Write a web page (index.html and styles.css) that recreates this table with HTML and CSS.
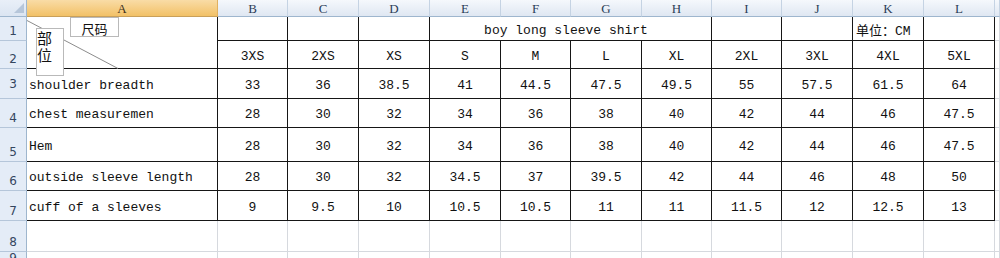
FILE: index.html
```html
<!DOCTYPE html>
<html>
<head>
<meta charset="utf-8">
<link rel="stylesheet" href="styles.css">
</head>
<body>
<div class="sheet">
  <!-- header row -->
  <div class="corner"></div>
  <div class="ch sel">A</div>
  <div class="ch">B</div><div class="ch">C</div><div class="ch">D</div><div class="ch">E</div>
  <div class="ch">F</div><div class="ch">G</div><div class="ch">H</div><div class="ch">I</div>
  <div class="ch">J</div><div class="ch">K</div><div class="ch">L</div><div class="ch"></div>

  <!-- row 1 -->
  <div class="rh">1</div>
  <div class="c t merged-a">
    <svg class="diag" width="100" height="60" viewBox="0 0 100 60"><line x1="0" y1="3.5" x2="91" y2="51.5" stroke="#8c8c8c" stroke-width="1"/></svg>
    <div class="tb tb-size">尺码</div>
    <div class="tb tb-part">部<br>位</div>
  </div>
  <div class="c t"></div><div class="c t"></div><div class="c t"></div>
  <div class="c t title">boy long sleeve shirt</div>
  <div class="c t"></div><div class="c t"></div>
  <div class="c t unit">单位：CM</div>
  <div class="c t"></div>
  <div class="c"></div>

  <!-- row 2 -->
  <div class="rh">2</div>
  <div class="c t">3XS</div><div class="c t">2XS</div><div class="c t">XS</div><div class="c t">S</div>
  <div class="c t">M</div><div class="c t">L</div><div class="c t">XL</div><div class="c t">2XL</div>
  <div class="c t">3XL</div><div class="c t">4XL</div><div class="c t">5XL</div>
  <div class="c"></div>

  <!-- row 3 -->
  <div class="rh r3">3</div>
  <div class="c t lbl">shoulder breadth</div>
  <div class="c t">33</div><div class="c t">36</div><div class="c t">38.5</div><div class="c t">41</div>
  <div class="c t">44.5</div><div class="c t">47.5</div><div class="c t">49.5</div><div class="c t">55</div>
  <div class="c t">57.5</div><div class="c t">61.5</div><div class="c t">64</div>
  <div class="c"></div>

  <!-- row 4 -->
  <div class="rh">4</div>
  <div class="c t lbl">chest measuremen</div>
  <div class="c t">28</div><div class="c t">30</div><div class="c t">32</div><div class="c t">34</div>
  <div class="c t">36</div><div class="c t">38</div><div class="c t">40</div><div class="c t">42</div>
  <div class="c t">44</div><div class="c t">46</div><div class="c t">47.5</div>
  <div class="c"></div>

  <!-- row 5 -->
  <div class="rh">5</div>
  <div class="c t lbl">Hem</div>
  <div class="c t">28</div><div class="c t">30</div><div class="c t">32</div><div class="c t">34</div>
  <div class="c t">36</div><div class="c t">38</div><div class="c t">40</div><div class="c t">42</div>
  <div class="c t">44</div><div class="c t">46</div><div class="c t">47.5</div>
  <div class="c"></div>

  <!-- row 6 -->
  <div class="rh">6</div>
  <div class="c t lbl">outside sleeve length</div>
  <div class="c t">28</div><div class="c t">30</div><div class="c t">32</div><div class="c t">34.5</div>
  <div class="c t">37</div><div class="c t">39.5</div><div class="c t">42</div><div class="c t">44</div>
  <div class="c t">46</div><div class="c t">48</div><div class="c t">50</div>
  <div class="c"></div>

  <!-- row 7 -->
  <div class="rh">7</div>
  <div class="c t lbl">cuff of a sleeves</div>
  <div class="c t">9</div><div class="c t">9.5</div><div class="c t">10</div><div class="c t">10.5</div>
  <div class="c t">10.5</div><div class="c t">11</div><div class="c t">11</div><div class="c t">11.5</div>
  <div class="c t">12</div><div class="c t">12.5</div><div class="c t">13</div>
  <div class="c"></div>

  <!-- row 8 -->
  <div class="rh">8</div>
  <div class="c"></div><div class="c"></div><div class="c"></div><div class="c"></div><div class="c"></div>
  <div class="c"></div><div class="c"></div><div class="c"></div><div class="c"></div><div class="c"></div>
  <div class="c"></div><div class="c"></div><div class="c"></div>

  <!-- row 9 -->
  <div class="rh">9</div>
  <div class="c"></div><div class="c"></div><div class="c"></div><div class="c"></div><div class="c"></div>
  <div class="c"></div><div class="c"></div><div class="c"></div><div class="c"></div><div class="c"></div>
  <div class="c"></div><div class="c"></div><div class="c"></div>
</div>
</body>
</html>
```

FILE: styles.css
```css
html, body {
  margin: 0;
  padding: 0;
  background: #ffffff;
  width: 1000px;
  height: 258px;
  overflow: hidden;
}

.sheet {
  display: grid;
  grid-template-columns: 27px 191px 70px 71px 71px 71px 70px 71px 70px 70px 71px 71px 71px 5px;
  grid-template-rows: 17px 24px 28px 30px 29px 34px 29px 30px 31px 16px;
  font-family: "Liberation Mono", "Noto Sans CJK SC", monospace;
  font-size: 13px;
  color: #111;
}

.sheet > div {
  box-sizing: border-box;
  min-width: 0;
  overflow: hidden;
}

/* corner select-all cell */
.corner {
  position: relative;
  background: linear-gradient(#e9eff8, #dbe5f2);
  border-right: 1px solid #9eb6ce;
  border-bottom: 1px solid #9eb6ce;
}
.corner::after {
  content: "";
  position: absolute;
  right: 2px;
  bottom: 3px;
  width: 10px;
  height: 10px;
  background: #b6c6da;
  clip-path: polygon(100% 0, 100% 100%, 0 100%);
}

/* column headers */
.ch {
  display: flex;
  align-items: center;
  justify-content: center;
  background: linear-gradient(#f5f8fc, #dfe7f2);
  border-right: 1px solid #c5d3e3;
  border-bottom: 1px solid #9eb6ce;
  font-family: "Liberation Serif", serif;
  font-size: 13px;
  color: #2b3d57;
  padding-top: 1px;
}
.ch.sel {
  background: linear-gradient(#f9dca6, #f2c167);
  border-right-color: #e0b060;
  border-bottom-color: #c9a05a;
  color: #3a3020;
}

/* row headers */
.rh {
  display: flex;
  align-items: flex-end;
  justify-content: center;
  padding-bottom: 2px;
  background: #e4ecf7;
  border-right: 1px solid #9eb6ce;
  border-bottom: 1px solid #b5c6da;
  font-family: "DejaVu Sans", sans-serif;
  font-size: 12px;
  color: #34465f;
}
.rh.r3 {
  padding-bottom: 7px;
}

/* cells */
.c {
  display: flex;
  align-items: center;
  justify-content: center;
  padding-top: 3px;
  border-right: 1px solid #d6d9de;
  border-bottom: 1px solid #d6d9de;
  white-space: nowrap;
}
.c.t {
  border-right-color: #161616;
  border-bottom-color: #161616;
}
.c.lbl {
  justify-content: flex-start;
  padding-left: 2px;
}

.merged-a {
  grid-row: span 2;
  position: relative;
  overflow: visible !important;
}
.title {
  grid-column: span 4;
  padding-right: 9px;
}
.unit {
  justify-content: flex-start !important;
  padding-left: 3px;
  padding-top: 2px !important;
}
.unit, .tb {
  font-family: "Liberation Mono", "Noto Sans CJK SC", monospace;
}

.diag {
  position: absolute;
  left: 0;
  top: 0;
}

/* floating text boxes */
.tb {
  position: absolute;
  box-sizing: border-box;
  background: #ffffff;
  border: 1px solid #b9b9b9;
  color: #111;
  z-index: 2;
}
.tb-size {
  left: 43px;
  top: 0;
  width: 49px;
  height: 20px;
  font-size: 13px;
  line-height: 13px;
  padding-top: 6px;
  text-align: center;
}
.tb-part {
  left: 9px;
  top: 11px;
  width: 28px;
  height: 48px;
  font-size: 15px;
  line-height: 17px;
  padding-top: 3px;
  padding-left: 0;
}
```
